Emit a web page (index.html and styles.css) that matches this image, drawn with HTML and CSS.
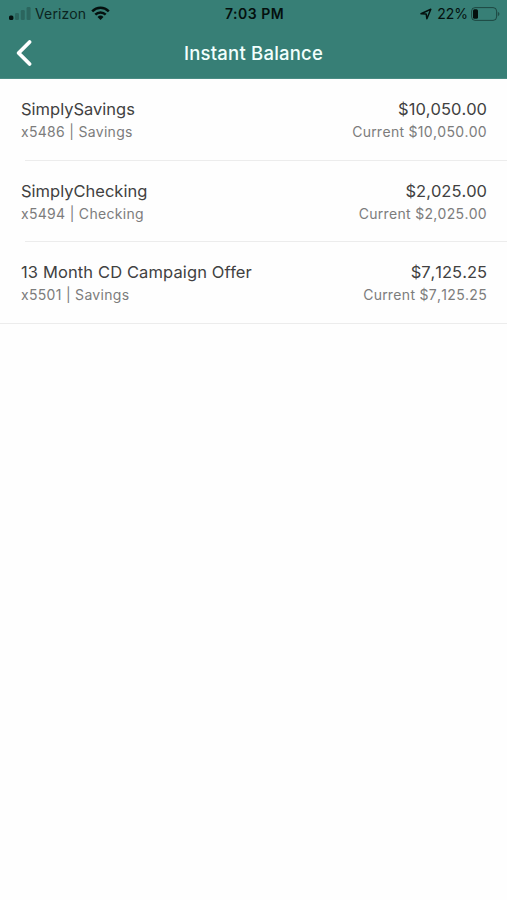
FILE: index.html
```html
<!DOCTYPE html>
<html lang="en">
<head>
<meta charset="utf-8">
<title>Instant Balance</title>
<link rel="stylesheet" href="styles.css">
</head>
<body>
<header class="header">
  <div class="status">
    <div class="carrier">
      <svg class="signal" width="22" height="13" viewBox="0 0 22 13"><rect x="0" y="8.5" width="4.4" height="4.5" rx="1.5"/><g opacity=".22"><rect x="6" y="6" width="4" height="7" rx="1.2"/><rect x="11.8" y="3" width="4" height="10" rx="1.2"/><rect x="17.6" y="0" width="4" height="13" rx="1.2"/></g></svg>
      <span class="carrier-name">Verizon</span>
      <svg class="wifi" width="19" height="15" viewBox="0 0 19 15"><g fill="none" stroke="currentColor" stroke-width="2.5"><path d="M1.2 5.3C5.9.6 13.1.6 17.8 5.3"/><path d="M4.3 8.6C7.2 5.7 11.8 5.7 14.7 8.6"/></g><path d="M6.5 10.9Q9.5 8.2 12.5 10.9L9.5 14.1Z"/></svg>
    </div>
    <span class="time">7:03 PM</span>
    <div class="power">
      <svg class="location" width="12" height="12" viewBox="0 0 12 12"><path d="M1 5.7 10.8 1.2 6.9 10.8 6.2 6Z" fill="none" stroke="currentColor" stroke-width="1.5" stroke-linejoin="round"/></svg>
      <span class="percent">22%</span>
      <svg class="battery" width="29" height="14" viewBox="0 0 29 14"><rect x=".6" y=".6" width="25" height="12.8" rx="3.5" fill="none" stroke="currentColor" stroke-width="1" opacity=".5"/><rect x="2" y="2.2" width="5" height="9.6" rx="1.5"/><path d="M26.8 4.7Q28.5 5.5 28.5 7T26.8 9.3Z" opacity=".45"/></svg>
    </div>
  </div>
  <nav class="navbar">
    <svg class="back" width="18" height="28" viewBox="0 0 18 28"><path d="M14.6 3 3.6 14 14.6 25" fill="none" stroke="#fff" stroke-width="3.8" stroke-linecap="round" stroke-linejoin="round"/></svg>
    <h1 class="title">Instant Balance</h1>
  </nav>
</header>
<main class="accounts">
  <section class="account">
    <div class="line primary"><span>SimplySavings</span><span class="amount">$10,050.00</span></div>
    <div class="line secondary"><span>x5486 | Savings</span><span class="current">Current $10,050.00</span></div>
  </section>
  <section class="account">
    <div class="line primary"><span>SimplyChecking</span><span class="amount">$2,025.00</span></div>
    <div class="line secondary"><span>x5494 | Checking</span><span class="current">Current $2,025.00</span></div>
  </section>
  <section class="account">
    <div class="line primary"><span class="offer">13 Month CD Campaign Offer</span><span class="amount">$7,125.25</span></div>
    <div class="line secondary"><span>x5501 | Savings</span><span class="current">Current $7,125.25</span></div>
  </section>
</main>
</body>
</html>
```
FILE: styles.css
```css
* { box-sizing: border-box; }
body {
  margin: 0;
  min-height: 900px;
  background: #fefefe;
  color: #414141;
  font-family: Inter, "Liberation Sans", sans-serif;
}
svg { display: block; flex: none; fill: currentColor; }
.header { height: 79px; background: #377f76; color: #04100e; border-bottom: 1px solid #4a8c84; }
.status {
  display: grid;
  grid-template-columns: 1fr auto 1fr;
  height: 27px;
  padding: 0 7px 0 9px;
  line-height: 27px;
}
.carrier, .power { display: flex; align-items: center; }
.carrier-name { width: 51px; margin: 0 5px 0 4px; font-size: 14px; letter-spacing: .15px; color: #0b2420; }
.time { font-size: 14px; font-weight: 600; letter-spacing: .5px; white-space: nowrap; }
.power { justify-content: flex-end; }
.percent { margin: 0 3px 0 5px; font-size: 14px; }
.navbar {
  display: grid;
  grid-template-columns: 60px 1fr 60px;
  align-items: center;
  height: 51px;
}
.back { margin-left: 15px; }
.title { margin: 0; text-align: center; color: #f2fffd; font-size: 18.5px; font-weight: 500; line-height: 24px; letter-spacing: .22px; }
.account { height: 81.5px; padding: 19px 20px 0 21px; background: linear-gradient(#ececec, #ececec) 25px 100% / 100% 1px no-repeat; }
.account:last-child { background-position-x: 0; }
.line { display: flex; justify-content: space-between; white-space: nowrap; }
.primary { font-size: 16.5px; line-height: 22px; }
.offer { letter-spacing: .12px; }
.amount, .current { font-kerning: none; }
.secondary { color: #7c7c7c; font-size: 14px; line-height: 24px; letter-spacing: .3px; }
```
